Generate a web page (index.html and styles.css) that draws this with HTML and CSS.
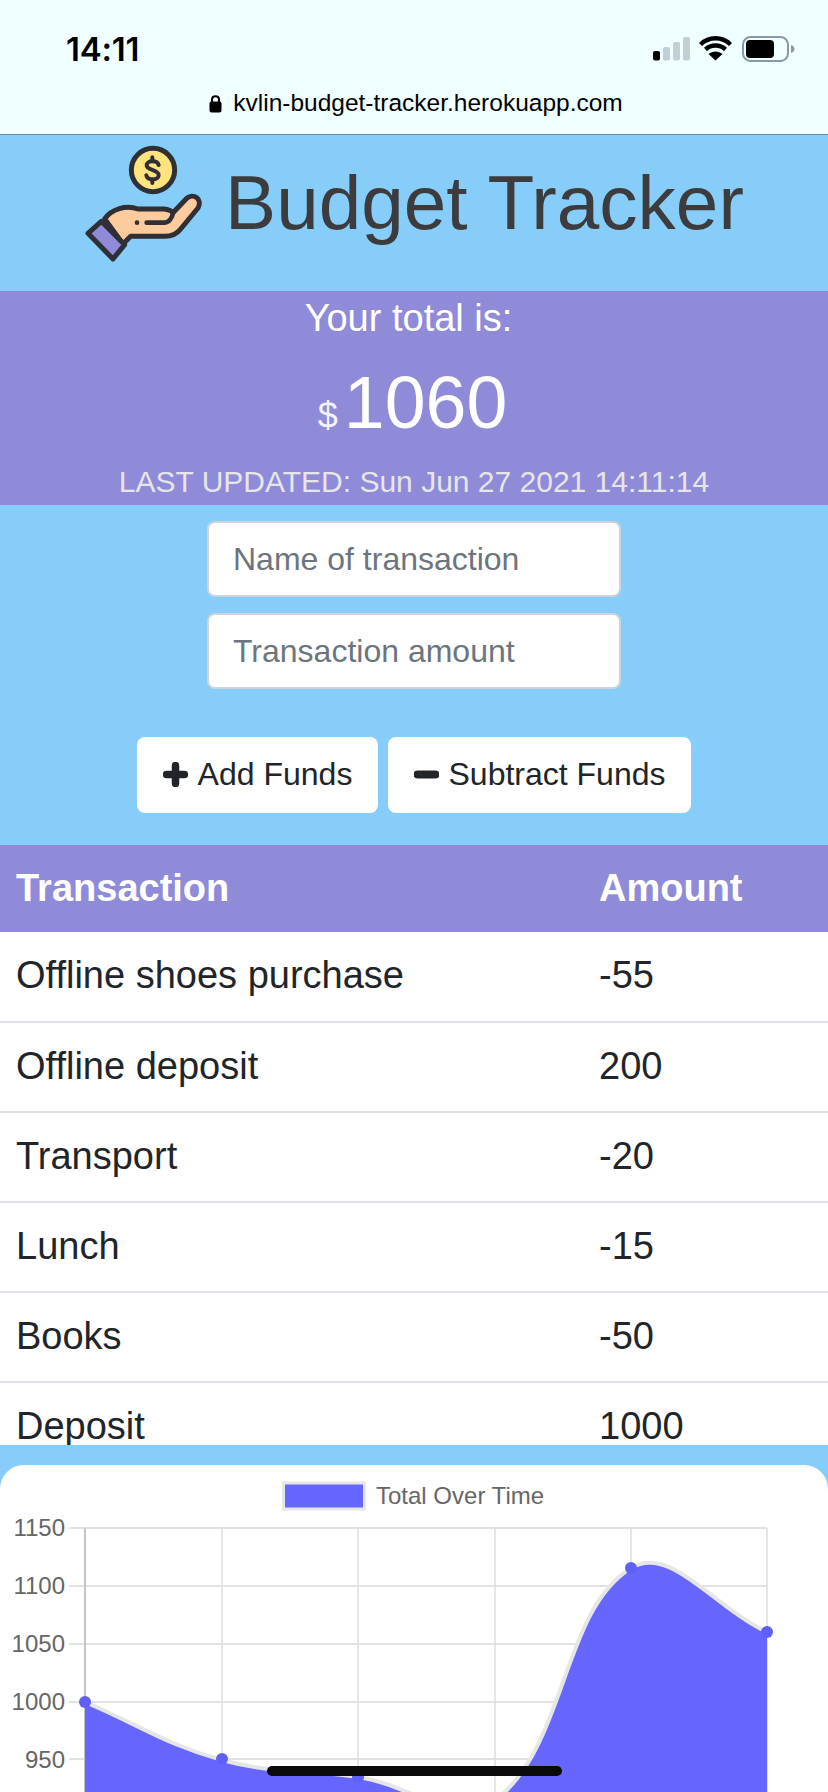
FILE: index.html
```html
<!DOCTYPE html>
<html lang="en">
<head>
    <meta charset="UTF-8">
    <title>Budget Tracker</title>
    <link rel="stylesheet" href="styles.css">
</head>
<body>
    <div class="screen">
        <div class="browser-bar">
            <div class="status-row">
                <span class="clock">14:11</span>
                <svg class="status-icons" width="144" height="26" viewBox="652 37 144 26">
                    <rect x="653" y="52" width="7" height="9.500" rx="2" fill="#000"/>
                    <rect x="663" y="48" width="7" height="13.500" rx="2" fill="#c2ced8"/>
                    <rect x="673" y="43" width="7" height="18.500" rx="2" fill="#c2ced8"/>
                    <rect x="683" y="38" width="7" height="23.500" rx="2" fill="#c2ced8"/>
                    <path d="M700.500 45.500C709 37.300 722 37.300 730.500 45.500M705.500 50.500C711 45.300 720 45.300 725.500 50.500" fill="none" stroke="#000" stroke-width="4.500"/>
                    <path d="M715.500 61.500L708.500 55C712.500 51.500 718.500 51.500 722.500 55Z" fill="#000"/>
                    <rect x="743" y="38" width="45" height="24" rx="7.500" fill="none" stroke="#8a9aa5" stroke-width="2"/>
                    <rect x="746" y="41" width="28" height="18" rx="4" fill="#000"/>
                    <path d="M791 46C793.500 47 794.500 48.500 794.500 50C794.500 51.500 793.500 53 791 54Z" fill="#8a9aa5"/>
                </svg>
            </div>
            <div class="url-row">
                <svg width="13" height="19" viewBox="0 0 13 19">
                    <path d="M3 8.500V5.500C3 1 10 1 10 5.500V8.500" fill="none" stroke="#000" stroke-width="2"/>
                    <rect x="0.500" y="7.500" width="12" height="11" rx="2" fill="#000"/>
                </svg>
                <span>kvlin-budget-tracker.herokuapp.com</span>
            </div>
        </div>

        <header class="title-bar">
            <svg class="logo" width="120" height="120" viewBox="78 40 360 360">
                <circle cx="285" cy="118" r="65" fill="#ffe37c" stroke="#2f2f35" stroke-width="15"/>
                <path d="M302 103C298 88 266 88 266 104C266 120 302 116 302 134C302 150 268 150 265 134" fill="none" stroke="#2f2f35" stroke-width="12" stroke-linecap="round"/>
                <path d="M283 80V90M283 147V157" fill="none" stroke="#2f2f35" stroke-width="12" stroke-linecap="round"/>
                <path d="M140 265C160 235 205 222 240 235L318 235C332 236 343 243 345 246L385 204C405 185 435 205 420 232L368 295C355 312 340 317 320 317L218 317L195 340Z" fill="#fdcb9e" stroke="#2f2f35" stroke-width="15" stroke-linejoin="round"/>
                <path d="M266 276H318C332 276 343 262 345 246" fill="none" stroke="#2f2f35" stroke-width="14" stroke-linecap="round"/>
                <circle cx="237" cy="276" r="7" fill="#2f2f35"/>
                <path d="M130 272L200 342L165 385L90 308Z" fill="#8f8bd9" stroke="#2f2f35" stroke-width="15" stroke-linejoin="round"/>
            </svg>
            <h1>Budget Tracker</h1>
        </header>

        <section class="total-bar">
            <div class="total-label">Your total is:</div>
            <div class="total-amount"><small>$</small><span>1060</span></div>
            <div class="total-updated">LAST UPDATED: Sun Jun 27 2021 14:11:14</div>
        </section>

        <section class="form-area">
            <input class="field" type="text" placeholder="Name of transaction">
            <input class="field" type="text" placeholder="Transaction amount">
            <div class="actions">
                <button class="btn btn-add">
                    <svg width="25" height="25" viewBox="0 0 25 25"><path d="M12.500 3.500V21.500M3.500 12.500H21.500" stroke="#212529" stroke-width="7.500" stroke-linecap="round"/></svg>
                    Add Funds
                </button>
                <button class="btn btn-sub">
                    <svg width="25" height="25" viewBox="0 0 25 25"><path d="M3.500 12.500H21.500" stroke="#212529" stroke-width="8" stroke-linecap="round"/></svg>
                    Subtract Funds
                </button>
            </div>
        </section>

        <div class="table-wrap">
            <table>
                <thead>
                    <tr><th>Transaction</th><th>Amount</th></tr>
                </thead>
                <tbody>
                    <tr><td>Offline shoes purchase</td><td>-55</td></tr>
                    <tr><td>Offline deposit</td><td>200</td></tr>
                    <tr><td>Transport</td><td>-20</td></tr>
                    <tr><td>Lunch</td><td>-15</td></tr>
                    <tr><td>Books</td><td>-50</td></tr>
                    <tr><td>Deposit</td><td>1000</td></tr>
                </tbody>
            </table>
        </div>

        <div class="chart-card">
            <svg class="chart" width="828" height="340" viewBox="0 1465 828 340">
                <rect class="legend-box" x="283.500" y="1483" width="81" height="26"/>
                <text class="legend-text" x="376" y="1504">Total Over Time</text>

                <g class="grid">
                    <path d="M69 1528H767M69 1586H767M69 1644H767M69 1702H767M69 1759H767"/>
                    <path class="grid-x" d="M222 1528V1805M358 1528V1805M495 1528V1805M631 1528V1805M767 1528V1805"/>
                </g>
                <path class="axis" d="M85 1528V1805"/>

                <g class="tick-labels">
                    <text x="65" y="1536">1150</text>
                    <text x="65" y="1594">1100</text>
                    <text x="65" y="1652">1050</text>
                    <text x="65" y="1710">1000</text>
                    <text x="65" y="1768">950</text>
                </g>

                <path class="area" d="M85 1702C139.800 1725.200 165.200 1744.400 222 1760C274.400 1774.400 303.800 1769 358 1777C413 1785.200 457.800 1828.900 495 1800.500C567 1745.300 561.200 1611.300 631 1568C670 1543.900 712.600 1606.400 767 1632V1805H85Z"/>
                <path class="line" d="M85 1702C139.800 1725.200 165.200 1744.400 222 1760C274.400 1774.400 303.800 1769 358 1777C413 1785.200 457.800 1828.900 495 1800.500C567 1745.300 561.200 1611.300 631 1568C670 1543.900 712.600 1606.400 767 1632"/>

                <g class="points">
                    <circle cx="85" cy="1702" r="6"/>
                    <circle cx="222" cy="1759" r="6"/>
                    <circle cx="358" cy="1777" r="6"/>
                    <circle cx="631" cy="1568" r="6"/>
                    <circle cx="767" cy="1632" r="6"/>
                </g>
            </svg>
        </div>

        <div class="home-indicator"></div>
    </div>
</body>
</html>
```

FILE: styles.css
```css
* {
    box-sizing: border-box;
}

html, body {
    margin: 0;
    padding: 0;
}

body {
    font-family: "Liberation Sans", Arial, sans-serif;
    color: #212529;
}

.screen {
    position: relative;
    width: 828px;
    height: 1792px;
    overflow: hidden;
    background-color: #87cdf9;
}

/* iOS status bar and address bar */
.browser-bar {
    height: 135px;
    padding-top: 30px;
    background-color: #f0ffff;
    border-bottom: 1px solid #5f93ad;
}

.status-row {
    display: flex;
    justify-content: space-between;
    align-items: center;
    height: 38px;
    padding: 0 32px 0 66px;
}

.clock {
    font-family: Inter, sans-serif;
    font-size: 33px;
    font-weight: 600;
    letter-spacing: -0.2px;
    color: #000;
}

.url-row {
    display: flex;
    justify-content: center;
    align-items: center;
    gap: 11px;
    height: 34px;
    margin-top: 18px;
    padding-left: 4px;
    font-size: 24.500px;
    color: #000;
}

/* heading */
.title-bar {
    display: flex;
    justify-content: center;
    align-items: center;
    gap: 21px;
    height: 156px;
    padding-bottom: 21px;
}

.logo {
    margin-bottom: -3px;
}

.title-bar h1 {
    margin: 0;
    font-size: 76.500px;
    font-weight: 400;
    color: #3c3c3e;
}

/* total */
.total-bar {
    height: 214px;
    background-color: #8f8bd9;
    color: #fff;
    text-align: center;
}

.total-label {
    padding: 3px 11px 0 0;
    font-size: 38px;
    line-height: 48px;
}

.total-amount {
    height: 116px;
    padding: 3px 3px 0 0;
    line-height: 116px;
    font-size: 73.500px;
}

.total-amount small {
    margin-right: 6px;
    font-size: 36px;
    opacity: 0.9;
}

.total-updated {
    padding-top: 7px;
    font-size: 30px;
    line-height: 34px;
    color: #e6e6e6;
}

/* form */
.form-area {
    display: flex;
    flex-direction: column;
    align-items: center;
    height: 340px;
    padding-top: 16px;
}

.field {
    width: 414px;
    height: 76px;
    margin-bottom: 16px;
    padding: 0 24px;
    font-family: inherit;
    font-size: 32px;
    color: #495057;
    background-color: #fff;
    border: 2px solid #ced4da;
    border-radius: 8px;
}

.field::placeholder {
    color: #6c757d;
    opacity: 1;
}

.actions {
    display: flex;
    gap: 10px;
    margin-top: 32px;
}

.btn {
    display: flex;
    align-items: center;
    justify-content: center;
    gap: 10px;
    height: 76px;
    padding: 0 0 2px;
    font-family: inherit;
    font-size: 32px;
    color: #212529;
    background-color: #fff;
    border: none;
    border-radius: 8px;
}

.btn-add {
    width: 241px;
}

.btn-sub {
    width: 303px;
}

/* table is cut off by its scroll box */
.table-wrap {
    height: 600px;
    overflow: hidden;
    background-color: #fff;
}

table {
    width: 100%;
    border-collapse: collapse;
    font-size: 38px;
}

th {
    height: 87px;
    padding: 0 16px;
    text-align: left;
    color: #fff;
    background-color: #8f8bd9;
}

th:first-child, td:first-child {
    width: 583px;
}

td {
    height: 90px;
    padding: 0 16px 2px;
    border-bottom: 2px solid #dee2e6;
}

/* chart */
.chart-card {
    height: 340px;
    margin-top: 20px;
    background-color: #fff;
    border-radius: 24px 24px 0 0;
    overflow: hidden;
}

.chart {
    display: block;
}

.legend-box {
    fill: #6666ff;
    stroke: #e6e6e6;
    stroke-width: 3;
}

.legend-text {
    font-size: 24px;
    fill: #666;
}

.grid path {
    fill: none;
    stroke: #e2e2e2;
    stroke-width: 2;
}

.grid .grid-x {
    stroke: #dedede;
    stroke-width: 1.500;
}

.axis {
    fill: none;
    stroke: #c4c4c4;
    stroke-width: 2;
}

.tick-labels text {
    font-size: 24px;
    fill: #666;
    text-anchor: end;
}

.area {
    fill: #6666ff;
}

.line {
    fill: none;
    stroke: #e6e6e6;
    stroke-width: 4;
}

.points circle {
    fill: #6060f8;
}

.home-indicator {
    position: absolute;
    left: 267px;
    top: 1766px;
    width: 295px;
    height: 10px;
    background-color: #0a0a0a;
    border-radius: 5px;
}
```
